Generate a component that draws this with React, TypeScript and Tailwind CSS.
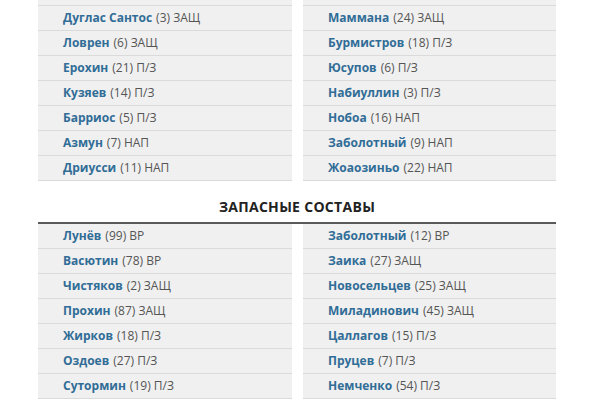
const starters: [string, string, string][] = [
  ["Ракицкий", "44", "ЗАЩ"],
  ["Дуглас Сантос", "3", "ЗАЩ"],
  ["Ловрен", "6", "ЗАЩ"],
  ["Ерохин", "21", "П/З"],
  ["Кузяев", "14", "П/З"],
  ["Барриос", "5", "П/З"],
  ["Азмун", "7", "НАП"],
  ["Дриусси", "11", "НАП"],
];

const startersAway: [string, string, string][] = [
  ["Варела", "4", "ЗАЩ"],
  ["Маммана", "24", "ЗАЩ"],
  ["Бурмистров", "18", "П/З"],
  ["Юсупов", "6", "П/З"],
  ["Набиуллин", "3", "П/З"],
  ["Нобоа", "16", "НАП"],
  ["Заболотный", "9", "НАП"],
  ["Жоаозиньо", "22", "НАП"],
];

const subs: [string, string, string][] = [
  ["Лунёв", "99", "ВР"],
  ["Васютин", "78", "ВР"],
  ["Чистяков", "2", "ЗАЩ"],
  ["Прохин", "87", "ЗАЩ"],
  ["Жирков", "18", "П/З"],
  ["Оздоев", "27", "П/З"],
  ["Сутормин", "19", "П/З"],
];

const subsAway: [string, string, string][] = [
  ["Заболотный", "12", "ВР"],
  ["Заика", "27", "ЗАЩ"],
  ["Новосельцев", "25", "ЗАЩ"],
  ["Миладинович", "45", "ЗАЩ"],
  ["Цаллагов", "15", "П/З"],
  ["Пруцев", "7", "П/З"],
  ["Немченко", "54", "П/З"],
];

function PlayerColumn({ players }: { players: [string, string, string][] }) {
  return (
    <ul>
      {players.map(([name, num, pos]) => (
        <li
          key={name + num}
          className="h-[25px] flex items-center pl-[25px] bg-[#f0f0f0] border-b border-[#dadada] text-[12px] whitespace-nowrap"
        >
          <span className="font-bold text-[#306d97]">{name}</span>
          <span className="text-[#555] ml-[4px]">
            ({num}) {pos}
          </span>
        </li>
      ))}
    </ul>
  );
}

export default function App() {
  return (
    <div
      className="w-[600px] h-[400px] overflow-hidden bg-white"
      style={{ fontFamily: '"Open Sans", "Liberation Sans", sans-serif' }}
    >
      <div className="ml-[38px] w-[518px]">
        <div className="grid grid-cols-[254px_253px] gap-x-[11px] mt-[-19px]">
          <PlayerColumn players={starters} />
          <PlayerColumn players={startersAway} />
        </div>
        <h2 className="pt-[18px] pb-[7px] leading-[16px] text-center text-[14px] font-bold uppercase tracking-[0.3px] text-[#222] border-b-2 border-[#5a5a5a]">
          Запасные составы
        </h2>
        <div className="grid grid-cols-[254px_253px] gap-x-[11px]">
          <PlayerColumn players={subs} />
          <PlayerColumn players={subsAway} />
        </div>
      </div>
    </div>
  );
}
